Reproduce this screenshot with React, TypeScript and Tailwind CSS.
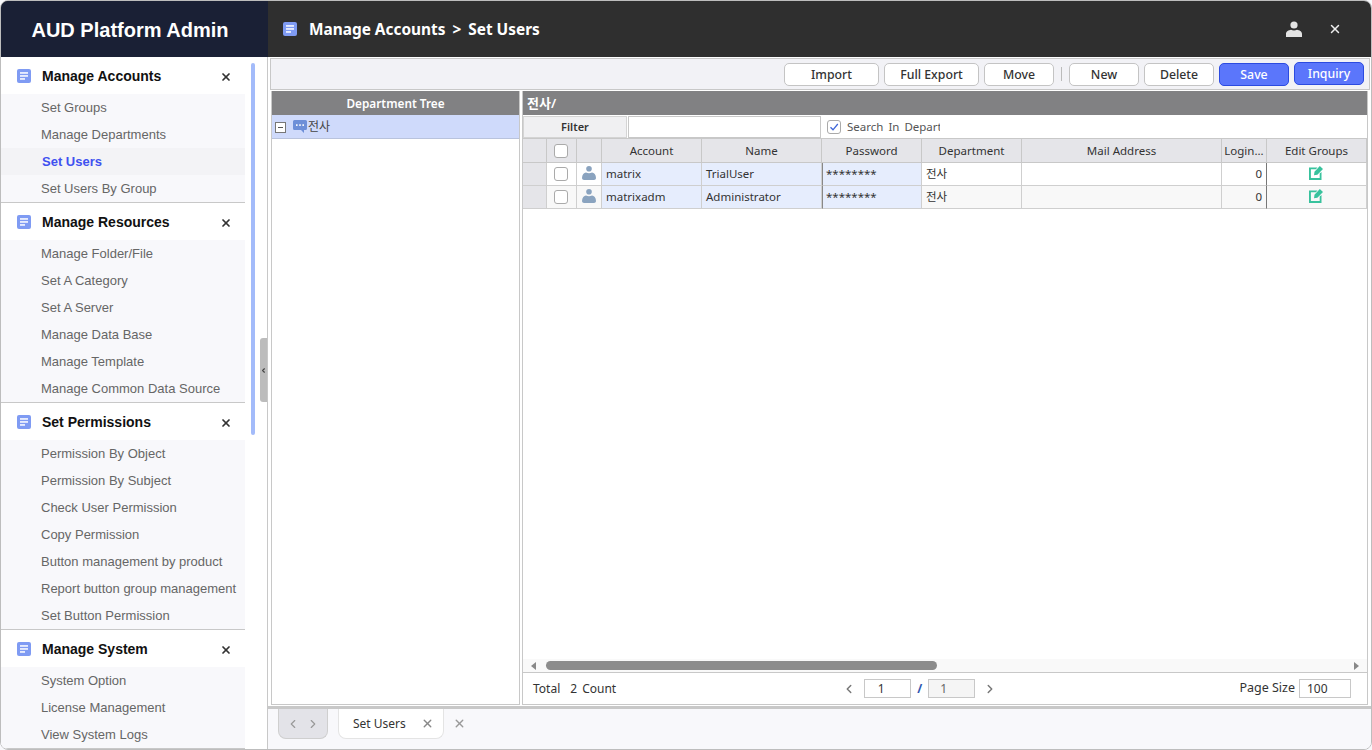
import { ChevronLeft, ChevronRight, X } from "lucide-react"

const menus = [
  { title: "Manage Accounts", items: ["Set Groups", "Manage Departments", "Set Users", "Set Users By Group"] },
  {
    title: "Manage Resources",
    items: ["Manage Folder/File", "Set A Category", "Set A Server", "Manage Data Base", "Manage Template", "Manage Common Data Source"],
  },
  {
    title: "Set Permissions",
    items: [
      "Permission By Object",
      "Permission By Subject",
      "Check User Permission",
      "Copy Permission",
      "Button management by product",
      "Report button group management",
      "Set Button Permission",
    ],
  },
  { title: "Manage System", items: ["System Option", "License Management", "View System Logs"] },
]

const users = [
  { account: "matrix", name: "TrialUser", bg: "bg-white", tint: "bg-[#e6edfd]" },
  { account: "matrixadm", name: "Administrator", bg: "bg-[#f8f8f8]", tint: "bg-[#e6edfd]" },
]

const gridCols = "grid-cols-[24px_30px_25px_100px_120px_100px_100px_200px_45px_100px]"

function DocIcon({ className }: { className?: string }) {
  return (
    <svg viewBox="0 0 14 14" className={className}>
      <rect width="14" height="14" rx="2" fill="#7f9bf3" />
      <rect x="3" y="3.2" width="8" height="1.5" fill="#fff" />
      <rect x="3" y="6.2" width="8" height="1.5" fill="#fff" />
      <rect x="3" y="9.2" width="5" height="1.5" fill="#fff" />
    </svg>
  )
}

function PersonIcon({ className, fill }: { className?: string; fill: string }) {
  return (
    <svg viewBox="0 0 16 16" className={className}>
      <circle cx="8" cy="4" r="3.6" fill={fill} />
      <path d="M0 16v-3c0-2.6 2.7-4 5-4.2 1.7 1 4.3 1 6 0 2.300.2 5 1.6 5 4.2v3z" fill={fill} />
    </svg>
  )
}

function UserRowIcon() {
  return (
    <svg viewBox="0 0 14 14" className="w-[14px] h-[14px] mb-[3px]">
      <circle cx="7" cy="2.8" r="2.8" fill="#8aa3bf" />
      <path d="M0 12c0-3.500 2-5 4-5.400 1.800 1 4.200 1 6 0 2 .4 4 1.900 4 5.400 0 1.200-1 2-2 2H2c-1 0-2-.8-2-2z" fill="#8aa3bf" />
    </svg>
  )
}

function EditIcon() {
  return (
    <svg viewBox="0 0 14 14" className="w-[14px] h-[14px]">
      <path d="M0 1.5h8.5L6.8 3.300H1.900v8.800h8.800V7.600L12.500 6v8H0z" fill="#38c29d" />
      <path d="M10.800 0 14 3 8.400 8.700 5 9.200l.5-3.500z" fill="#38c29d" />
    </svg>
  )
}

function Check({ checked }: { checked?: boolean }) {
  return (
    <div className="w-[14px] h-[14px] rounded-[3px] border border-[#aaa] bg-white flex items-center justify-center">
      {checked && (
        <svg viewBox="0 0 12 12" className="w-3 h-3">
          <path d="M2.500 6.200 5 8.800l4.800-5.800" fill="none" stroke="#3f66d8" strokeWidth="1.300" />
        </svg>
      )}
    </div>
  )
}

function ToolButton({ label, width, primary, className = "" }: { label: string; width: string; primary?: boolean; className?: string }) {
  return (
    <button
      className={`${width} h-[23px] rounded-[5px] border text-[12.3px] font-medium leading-none pt-[2px] ${className} ${
        primary ? "bg-[#5b76fb] border-[#2c4be0] text-white" : "bg-white border-[#c4c4c4] text-[#333]"
      }`}
    >
      {label}
    </button>
  )
}

function HeaderCell({ children, className = "" }: { children?: React.ReactNode; className?: string }) {
  return (
    <div className={`bg-[#e5e5e9] border-r border-b border-[#c8c8c8] flex items-center justify-center text-[11.5px] text-[#333] overflow-hidden whitespace-nowrap ${className}`}>
      {children}
    </div>
  )
}

function BodyCell({ children, className = "" }: { children?: React.ReactNode; className?: string }) {
  return (
    <div className={`border-r border-b border-[#cfcfcf] flex items-center text-[11.5px] text-[#333] overflow-hidden whitespace-nowrap ${className}`}>
      {children}
    </div>
  )
}

export default function App() {
  return (
    <div className="w-[1372px] h-[750px] bg-[#f8f8fb] overflow-hidden relative [font-family:Noto_Sans,Noto_Sans_CJK_KR,sans-serif]">
      <div className="h-full flex flex-col border border-[#bdbdbd] rounded-[8px] overflow-hidden">
        {/* Top bar */}
        <div className="h-[56px] flex shrink-0 bg-[#2f2f2f]">
          <div className="w-[267px] bg-[#1a2035] flex items-center justify-center pt-[2px] pr-[9px] text-white text-[20px] font-bold [font-family:Liberation_Sans,Arial,sans-serif]">
            AUD Platform Admin
          </div>
          <div className="flex-1 flex items-center pl-[15px]">
            <DocIcon className="w-[14px] h-[14px]" />
            <span className="ml-[12px] pt-[2px] text-white text-[15.4px] font-bold">
              Manage Accounts<span className="mx-[7px]">&gt;</span>Set Users
            </span>
            <div className="ml-auto flex items-center">
              <PersonIcon className="w-4 h-4" fill="#e4e4e4" />
              <X className="w-[14px] h-[14px] ml-[26px] mr-[29px] text-[#eee]" strokeWidth={2.5} />
            </div>
          </div>
        </div>

        <div className="flex-1 flex min-h-0">
          {/* Sidebar */}
          <div className="w-[267px] shrink-0 flex bg-white relative border-r border-[#c8c8c8]">
            <div className="w-[244px] [font-family:Liberation_Sans,Arial,sans-serif]">
              {menus.map((menu) => (
                <div key={menu.title} className="border-b border-[#c8c8c8]">
                  <div className="h-[37px] flex items-center pl-[16px] pr-[13px] pb-[2px] bg-white">
                    <DocIcon className="w-[14px] h-[14px] mt-[2px]" />
                    <span className="ml-[11px] mt-[4px] text-[14px] font-bold text-[#111]">{menu.title}</span>
                    <X className="ml-auto mt-[4px] w-3 h-3 text-[#333]" strokeWidth={3.5} />
                  </div>
                  <div className="bg-[#f8f8fb]">
                    {menu.items.map((item) =>
                      item === "Set Users" ? (
                        <div key={item} className="h-[27px] flex items-center pl-[41px] bg-[#f3f3f6] text-[13px] font-bold text-[#3f51f0]">
                          {item}
                        </div>
                      ) : (
                        <div key={item} className="h-[27px] flex items-center pl-[40px] text-[13px] text-[#666] whitespace-nowrap">
                          {item}
                        </div>
                      ),
                    )}
                  </div>
                </div>
              ))}
            </div>
            <div className="absolute left-[250px] top-[6px] w-[4px] h-[372px] rounded-full bg-[#a3bbfa]" />
            <div className="absolute right-0 top-[281px] w-[7px] h-[64px] rounded-l-[3px] bg-[#bcbcbc] flex items-center justify-center">
              <ChevronLeft className="w-[9px] h-[9px] text-[#444]" strokeWidth={4} />
            </div>
          </div>

          {/* Main */}
          <div className="flex-1 min-w-0 flex flex-col">
            <div className="h-[652px] p-[1px] border-b-[3px] border-[#c8c8c8] flex flex-col bg-white">
              {/* Toolbar */}
              <div className="h-[32px] shrink-0 ml-[1px] bg-[#f2f2f6] border border-[#c8c8c8] flex items-center justify-end gap-[5px] pr-[5px]">
                <ToolButton label="Import" width="w-[95px]" />
                <ToolButton label="Full Export" width="w-[95px]" />
                <ToolButton label="Move" width="w-[70px]" />
                <div className="w-px h-[14px] bg-[#bbb] mx-[2px]" />
                <ToolButton label="New" width="w-[70px]" />
                <ToolButton label="Delete" width="w-[70px]" />
                <ToolButton label="Save" width="w-[70px]" primary />
                <ToolButton label="Inquiry" width="w-[70px]" primary className="-translate-y-px" />
              </div>

              <div className="flex-1 min-h-0 flex gap-[2px] pl-[2px] pr-[2px] pt-[1px]">
                {/* Tree */}
                <div className="w-[249px] shrink-0 border border-[#c8c8c8] border-t-0 flex flex-col">
                  <div className="h-[24px] bg-[#818183] flex items-center justify-center pt-[1px] text-[11.8px] font-semibold text-white">
                    Department Tree
                  </div>
                  <div className="h-[24px] bg-[#cfdafb] border-b border-[#b9c3dd] flex items-center pl-[3px] pt-[1px] text-[12px] text-[#444]">
                    <div className="w-[11px] h-[11px] border border-[#777] bg-white flex items-center justify-center">
                      <div className="w-[5px] h-px bg-[#555]" />
                    </div>
                    <svg viewBox="0 0 14 14" className="w-[14px] h-[14px] ml-[7px]">
                      <path d="M1.500 0h11A1.500 1.500 0 0 1 14 1.500v7A1.500 1.500 0 0 1 12.500 10H11v3L8 10H1.500A1.500 1.500 0 0 1 0 8.500v-7A1.500 1.500 0 0 1 1.500 0z" fill="#6d8fd8" />
                      <rect x="3" y="4.300" width="1.600" height="1.600" fill="#fff" />
                      <rect x="6.200" y="4.300" width="1.600" height="1.600" fill="#fff" />
                      <rect x="9.400" y="4.300" width="1.600" height="1.600" fill="#fff" />
                    </svg>
                    <span className="ml-px">전사</span>
                  </div>
                </div>

                {/* Grid panel */}
                <div className="flex-1 min-w-0 border border-[#c8c8c8] border-t-0 flex flex-col">
                  <div className="h-[24px] bg-[#818183] flex items-center pl-[4px] pt-[2px] text-[13px] font-semibold text-white">
                    전사/
                  </div>
                  <div className="h-[24px] flex items-center border-b border-[#c8c8c8]">
                    <div className="w-[104px] h-[22px] bg-[#f0f0f2] border border-[#d4d4d4] flex items-center justify-center pt-px text-[11px] font-semibold text-[#333]">
                      Filter
                    </div>
                    <div className="w-[193px] h-[22px] ml-px bg-white border border-[#c8c8c8]" />
                    <div className="ml-[6px]">
                      <Check checked />
                    </div>
                    <span className="ml-[6px] w-[93px] overflow-hidden whitespace-nowrap pt-[1px] text-[11.5px] [word-spacing:2px] text-[#555]">Search In Department</span>
                  </div>

                  <div className={`grid ${gridCols} h-[24px]`}>
                    <HeaderCell />
                    <HeaderCell className="pr-px">
                      <Check />
                    </HeaderCell>
                    <HeaderCell />
                    <HeaderCell>Account</HeaderCell>
                    <HeaderCell>Name</HeaderCell>
                    <HeaderCell>Password</HeaderCell>
                    <HeaderCell>Department</HeaderCell>
                    <HeaderCell>Mail Address</HeaderCell>
                    <HeaderCell>Login...</HeaderCell>
                    <HeaderCell>Edit Groups</HeaderCell>
                  </div>
                  {users.map((user) => (
                    <div key={user.account} className={`grid ${gridCols} h-[23px]`}>
                      <BodyCell className="bg-[#e5e5e9]" />
                      <BodyCell className={`${user.bg} justify-center pr-px`}>
                        <Check />
                      </BodyCell>
                      <BodyCell className={`${user.bg} justify-center pr-px`}>
                        <UserRowIcon />
                      </BodyCell>
                      <BodyCell className={`${user.tint} pl-[4px]`}>{user.account}</BodyCell>
                      <BodyCell className={`${user.tint} pl-[4px]`}>{user.name}</BodyCell>
                      <BodyCell className={`${user.tint} pl-[3px] border-l border-l-[#888] text-[9.5px]`}>********</BodyCell>
                      <BodyCell className={`${user.bg} pl-[4px]`}>전사</BodyCell>
                      <BodyCell className={user.bg} />
                      <BodyCell className={`${user.bg} justify-end pr-[4px] border-r-[#777]`}>0</BodyCell>
                      <BodyCell className={`${user.bg} justify-center pb-[3px] pr-px`}>
                        <EditIcon />
                      </BodyCell>
                    </div>
                  ))}

                  <div className="flex-1" />

                  {/* Horizontal scrollbar */}
                  <div className="h-[14px] bg-[#f9f9f9] border-b border-[#c8c8c8] flex items-center pl-[8px] pr-[8px]">
                    <div className="w-0 h-0 border-y-[4px] border-y-transparent border-r-[5px] border-r-[#888]" />
                    <div className="ml-[10px] w-[391px] h-[9px] rounded-full bg-[#8c8c8c]" />
                    <div className="ml-auto w-0 h-0 border-y-[4px] border-y-transparent border-l-[5px] border-l-[#888]" />
                  </div>

                  {/* Pager */}
                  <div className="h-[31px] flex items-center text-[12px] text-[#333] pl-[10px] pr-[16px] relative">
                    <span>Total</span>
                    <span className="ml-[10px]">2</span>
                    <span className="ml-[5px]">Count</span>
                    <div className="ml-[226px] flex items-center">
                      <ChevronLeft className="w-[14px] h-[14px] text-[#777]" strokeWidth={2.5} />
                      <div className="ml-[8px] w-[47px] h-[19px] border border-[#c8c8c8] bg-white flex items-center justify-center pr-[13px]">1</div>
                      <span className="mx-[6px] font-bold text-[#2f57b0]">/</span>
                      <div className="w-[47px] h-[19px] border border-[#c8c8c8] bg-[#f5f5f5] flex items-center justify-center pr-[16px] text-[#666]">1</div>
                      <ChevronRight className="ml-[8px] w-[14px] h-[14px] text-[#777]" strokeWidth={2.5} />
                    </div>
                    <span className="ml-auto text-[12.5px]">Page Size</span>
                    <div className="ml-[4px] w-[52px] h-[19px] border border-[#c8c8c8] bg-white flex items-center pl-[7px]">100</div>
                  </div>
                </div>
              </div>
            </div>

            {/* Tab bar */}
            <div className="flex-1 flex items-start pl-[10px] bg-[#f8f8fb]">
              <div className="w-[50px] h-[30px] bg-[#e3e3e8] border border-t-0 border-[#cfcfcf] rounded-b-[8px] flex items-center justify-center gap-[6px] text-[#999]">
                <ChevronLeft className="w-[14px] h-[14px]" strokeWidth={2} />
                <ChevronRight className="w-[14px] h-[14px]" strokeWidth={2} />
              </div>
              <div className="ml-[10px] w-[106px] h-[30px] bg-white border border-t-0 border-[#e4e4e4] rounded-b-[8px] flex items-center pl-[14px] text-[12px] text-[#333]">
                Set Users
                <X className="ml-[15px] w-[13px] h-[13px] text-[#888]" strokeWidth={2.5} />
              </div>
              <X className="ml-[9px] mt-[8px] w-[13px] h-[13px] text-[#999]" strokeWidth={2.5} />
            </div>
          </div>
        </div>
      </div>
    </div>
  )
}
